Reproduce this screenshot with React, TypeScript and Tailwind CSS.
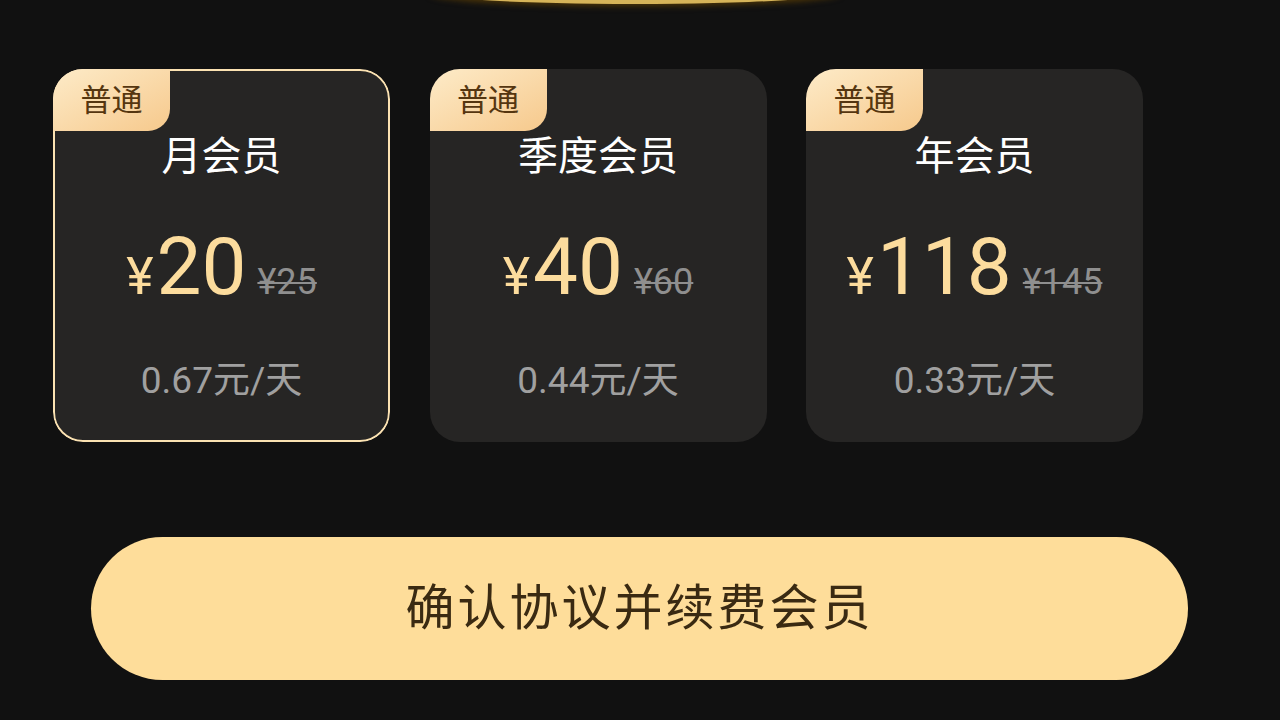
import React from 'react';

interface Plan {
    name: string;
    price: string;
    original: string;
    perDay: string;
}

const plans: Plan[] = [
    { name: '月会员', price: '20', original: '¥25', perDay: '0.67元/天' },
    { name: '季度会员', price: '40', original: '¥60', perDay: '0.44元/天' },
    { name: '年会员', price: '118', original: '¥145', perDay: '0.33元/天' },
];

const font = { fontFamily: 'Roboto, "Noto Sans CJK SC", sans-serif' };

function PlanCard({ plan, selected }: { plan: Plan; selected: boolean }) {
    return (
        <div className="relative w-[337px] h-[373px] shrink-0 rounded-[30px] overflow-hidden bg-[#262524]">
            {selected && (
                <div className="absolute inset-0 rounded-[30px] border-2 border-[#fbe2b2] pointer-events-none"></div>
            )}
            {/* badge */}
            <div className="absolute left-0 top-0 w-[117px] h-[62px] rounded-br-[22px] bg-gradient-to-br from-[#fdebc8] to-[#f6c98c] flex items-center justify-center">
                <span className="text-[31px] leading-none text-[#553610]">普通</span>
            </div>

            <div className="flex flex-col items-center pt-[66px]">
                <div className="text-[40px] leading-[44px] text-white">{plan.name}</div>
                <div className="mt-[48px] flex items-baseline leading-none">
                    <span className="text-[52px] text-[#fcdc9d]">¥</span>
                    <span className="text-[80px] text-[#fcdc9d] ml-[3px]">{plan.price}</span>
                    <span className="text-[36px] text-[#8f8f8f] line-through decoration-2 ml-[11px]">{plan.original}</span>
                </div>
                <div className="mt-[53px] text-[37px] leading-[42px] text-[#a0a0a0]">{plan.perDay}</div>
            </div>
        </div>
    );
}

export default function App() {
    return (
        <div className="relative w-[1280px] h-[720px] bg-[#111111] overflow-hidden" style={font}>
            {/* edge of the gold disc above */}
            <div className="absolute left-[430px] top-[-20px] w-[410px] h-[24px] rounded-b-[50%] bg-[#d6b459] shadow-[0_2px_6px_rgba(120,80,0,0.6)]"></div>

            <div className="flex gap-[39.5px] pl-[53px] pt-[69px]">
                {plans.map((plan, index) => (
                    <PlanCard key={plan.name} plan={plan} selected={index === 0} />
                ))}
            </div>

            <div className="mt-[95px] ml-[91px] w-[1097px] h-[143px] rounded-full bg-[#fedd9a] flex items-center justify-center">
                <span className="text-[49px] tracking-[3px] text-[#3a2a12]">确认协议并续费会员</span>
            </div>
        </div>
    );
}
